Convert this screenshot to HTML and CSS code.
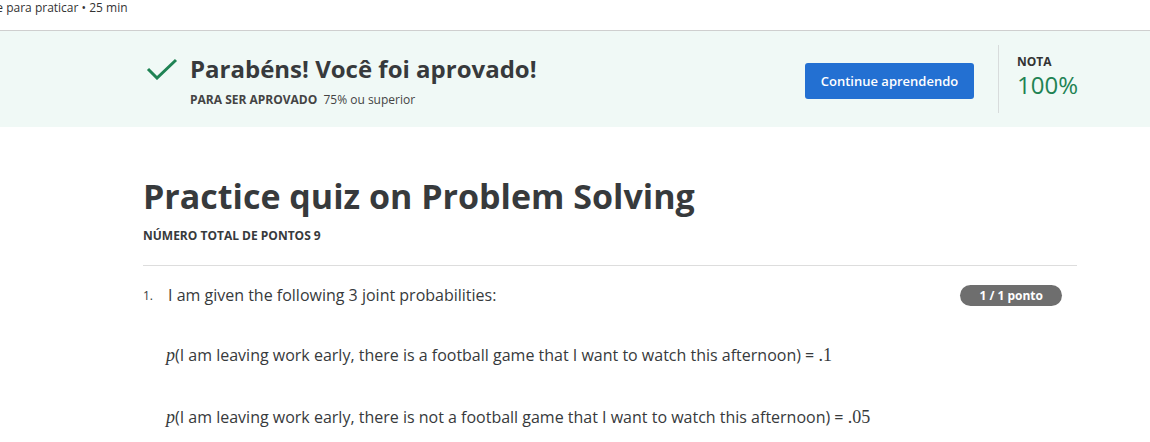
FILE: index.html
```html
<!DOCTYPE html>
<html lang="pt">
<head>
<meta charset="utf-8">
<link rel="stylesheet" href="styles.css">
</head>
<body>
<div class="topbar"><span class="topmeta">Teste para praticar • 25 min</span></div>
<section class="banner">
  <div class="banner-inner">
    <div class="pass">
      <svg class="check" width="32" height="22" viewBox="0 0 32 22"><path d="M2 11 L11 20 L30 2" fill="none" stroke="#1f8354" stroke-width="3"/></svg>
      <div class="pass-text">
        <h2 class="pass-title">Parabéns! Você foi aprovado!</h2>
        <div class="pass-sub"><strong>PARA SER APROVADO</strong> 75% ou superior</div>
      </div>
    </div>
    <button class="btn">Continue aprendendo</button>
    <div class="grade">
      <div class="grade-label">NOTA</div>
      <div class="grade-value">100%</div>
    </div>
  </div>
</section>
<main class="content">
  <h1 class="quiz-title">Practice quiz on Problem Solving</h1>
  <div class="total">NÚMERO TOTAL DE PONTOS 9</div>
  <hr class="rule">
  <div class="question">
    <div class="qnum">1.</div>
    <div class="qbody">
      <div class="qhead">
        <p class="qtext">I am given the following 3 joint probabilities:</p>
        <span class="badge">1 / 1 ponto</span>
      </div>
      <p class="prob"><span class="mi">p</span>(I am leaving work early, there is a football game that I want to watch this afternoon) = <span class="mn">.1</span></p>
      <p class="prob prob-next"><span class="mi">p</span>(I am leaving work early, there is not a football game that I want to watch this afternoon) = <span class="mn">.05</span></p>
    </div>
  </div>
</main>
</body>
</html>
```
FILE: styles.css
```css
* { box-sizing: border-box; }
body { margin: 0; font-family: "Open Sans", sans-serif; color: #373a3c; background: #fff; overflow: hidden; }
.topbar { height: 31px; border-bottom: 1px solid #cfcfcf; position: relative; overflow: hidden; }
.topmeta { position: absolute; left: -27px; top: -1px; font-size: 12px; color: #333; white-space: nowrap; }
.banner { background: #f0f9f6; height: 96px; }
.banner-inner { display: flex; align-items: flex-start; padding-left: 146px; }
.pass { display: flex; align-items: flex-start; width: 659px; padding-top: 21px; }
.check { margin-top: 6px; margin-right: 12px; }
.pass-title { margin: 0; font-size: 24px; font-weight: 700; line-height: 34px; color: #373a3c; }
.pass-sub { font-size: 12px; margin-top: 5px; color: #444; }
.pass-sub strong { font-weight: 700; margin-right: 3px; }
.btn { margin-top: 32px; width: 169px; height: 36px; background: #2370d2; color: #fff; border: 0; border-radius: 3px; font-family: "Open Sans", sans-serif; font-size: 13px; font-weight: 600; }
.grade { margin-left: 24px; margin-top: 14px; border-left: 1px solid #d8dcdc; height: 68px; padding-left: 18px; padding-top: 8px; }
.grade-label { font-size: 12px; font-weight: 700; color: #333; line-height: 18px; }
.grade-value { font-size: 24px; color: #1f8354; line-height: 28px; }
.content { padding: 0 73px 0 143px; }
.quiz-title { margin: 47px 0 0; font-size: 34px; font-weight: 700; line-height: 44px; color: #373a3c; }
.total { font-size: 12px; font-weight: 700; margin-top: 10px; line-height: 16px; }
.rule { border: 0; border-top: 1px solid #ddd; margin: 21px 0 0; }
.question { display: flex; margin-top: 17px; }
.qnum { width: 25px; font-size: 12px; padding-top: 4px; }
.qbody { flex: 1; }
.qhead { display: flex; justify-content: space-between; align-items: flex-start; }
.qtext { margin: 0; font-size: 16px; line-height: 24px; }
.badge { margin-right: 15px; margin-top: 2px; background: #6e6e6e; color: #fff; font-size: 12px; font-weight: 700; border-radius: 11px; padding: 2px 19px; line-height: 17px; }
.prob { margin: 36px 0 0 -2px; font-size: 16px; line-height: 24px; }
.prob-next { margin-top: 38px; }
.mi { font-family: "Liberation Serif", serif; font-style: italic; font-size: 18px; }
.mn { font-family: "Liberation Serif", serif; font-size: 18px; }
```
